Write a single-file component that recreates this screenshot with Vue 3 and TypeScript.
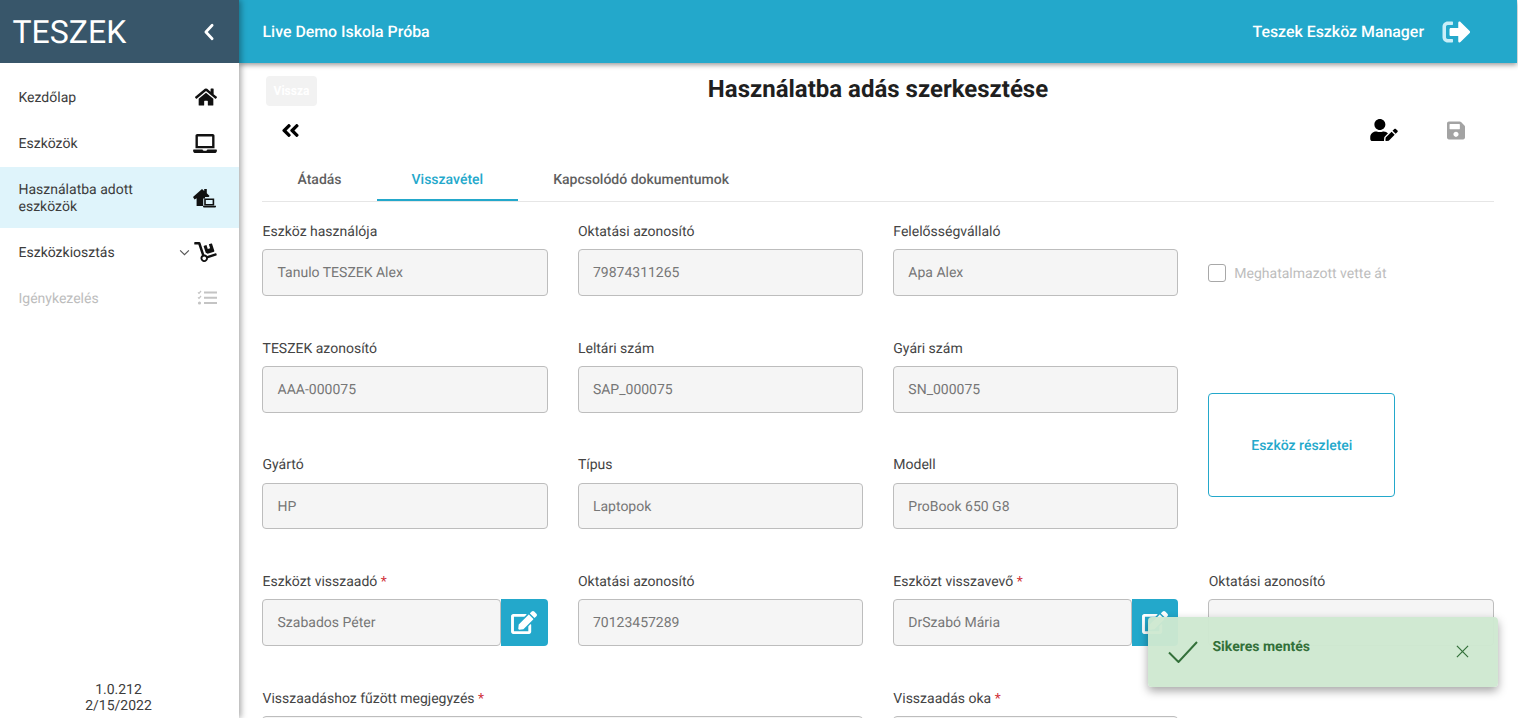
<script setup lang="ts">
interface Field {
  label: string
  value: string
  required?: boolean
  edit?: boolean
}
const firstRow: Field[] = [
  { label: 'Eszköz használója', value: 'Tanulo TESZEK Alex' },
  { label: 'Oktatási azonosító', value: '79874311265' },
  { label: 'Felelősségvállaló', value: 'Apa Alex' },
]
const secondRow: Field[] = [
  { label: 'TESZEK azonosító', value: 'AAA-000075' },
  { label: 'Leltári szám', value: 'SAP_000075' },
  { label: 'Gyári szám', value: 'SN_000075' },
]
const thirdRow: Field[] = [
  { label: 'Gyártó', value: 'HP' },
  { label: 'Típus', value: 'Laptopok' },
  { label: 'Modell', value: 'ProBook 650 G8' },
]
const fourthRow: Field[] = [
  { label: 'Eszközt visszaadó', value: 'Szabados Péter', required: true, edit: true },
  { label: 'Oktatási azonosító', value: '70123457289' },
  { label: 'Eszközt visszavevő', value: 'DrSzabó Mária', required: true, edit: true },
  { label: 'Oktatási azonosító', value: '' },
]
const editPath = 'M402.6 83.2l90.2 90.2c3.8 3.8 3.8 10 0 13.8L274.4 405.6l-92.8 10.3c-12.4 1.4-22.9-9.1-21.5-21.5l10.3-92.8L388.8 83.2c3.8-3.8 10-3.8 13.8 0zm162-22.9l-48.8-48.8c-15.2-15.2-39.9-15.2-55.2 0l-35.4 35.4c-3.8 3.8-3.8 10 0 13.8l90.2 90.2c3.8 3.8 10 3.8 13.8 0l35.4-35.4c15.2-15.3 15.2-40 0-55.2zM384 346.2V448H64V128h229.8c3.2 0 6.2-1.3 8.5-3.5l40-40c7.6-7.6 2.2-20.5-8.5-20.5H48C21.5 64 0 85.5 0 112v352c0 26.5 21.5 48 48 48h352c26.5 0 48-21.5 48-48V306.2c0-10.7-12.9-16-20.5-8.5l-40 40c-2.2 2.3-3.5 5.3-3.5 8.5z'
</script>

<template>
  <div class="shell">
    <aside class="sidebar">
      <div class="brand">
        <span class="brand-name">TESZEK</span>
        <svg class="brand-back" viewBox="0 0 12 20" width="12" height="18"><path d="M9.5 2.5 2.5 10l7 7.5" fill="none" stroke="#fff" stroke-width="3" stroke-linecap="round" stroke-linejoin="round" /></svg>
      </div>
      <nav class="nav">
        <a class="nav-item">
          <span class="nav-text">Kezdőlap</span>
          <svg class="nav-icon" viewBox="0 0 576 512" width="22" height="20"><path d="M280.37 148.26L96 300.11V464a16 16 0 0 0 16 16l112.06-.29a16 16 0 0 0 15.92-16V368a16 16 0 0 1 16-16h64a16 16 0 0 1 16 16v95.64a16 16 0 0 0 16 16.05L464 480a16 16 0 0 0 16-16V300L295.67 148.26a12.19 12.19 0 0 0-15.3 0zM571.6 251.47L488 182.56V44.05a12 12 0 0 0-12-12h-56a12 12 0 0 0-12 12v72.61L318.47 43a48 48 0 0 0-61 0L4.34 251.47a12 12 0 0 0-1.6 16.9l25.5 31A12 12 0 0 0 45.15 301l235.22-193.74a12.19 12.19 0 0 1 15.3 0L530.9 301a12 12 0 0 0 16.9-1.6l25.5-31a12 12 0 0 0-1.7-16.93z" /></svg>
        </a>
        <a class="nav-item">
          <span class="nav-text">Eszközök</span>
          <svg class="nav-icon" viewBox="0 0 640 512" width="24" height="19"><path d="M624 416H381.54c-.74 19.81-14.71 32-32.74 32H288c-18.69 0-33.02-17.47-32.77-32H16c-8.8 0-16 7.2-16 16v16c0 35.2 28.8 64 64 64h512c35.2 0 64-28.8 64-64v-16c0-8.8-7.2-16-16-16zM576 48c0-26.4-21.6-48-48-48H112C85.6 0 64 21.6 64 48v336h512V48zm-64 272H128V64h384v256z" /></svg>
        </a>
        <a class="nav-item active">
          <span class="nav-text">Használatba adott<br />eszközök</span>
          <svg class="nav-icon" viewBox="0 0 24 20" width="24" height="20">
            <path d="M0 9 9 1l2.2 1.9V1h2.6v4.3L16.6 8l-1 1H12v1.4h-1.8V18H3.6v-7.7l-2 1.3z" />
            <path d="M11.2 10.4h10v7h-10zm1.6 1.5v4h6.8v-4z" fill-rule="evenodd" />
            <path d="M10 17.8h13v.8a1 1 0 0 1-1 1H11a1 1 0 0 1-1-1z" />
          </svg>
        </a>
        <a class="nav-item after-active">
          <span class="nav-text">Eszközkiosztás</span>
          <span class="nav-right">
            <svg viewBox="0 0 12 8" width="11" height="7"><path d="M1 1.5 6 6.5l5-5" fill="none" stroke="#555" stroke-width="1.3" /></svg>
            <svg class="nav-icon" viewBox="0 0 576 512" width="23" height="20"><path d="M294.2 277.7c18 5 34.7 13.4 49.5 24.7l161.5-53.8c8.4-2.8 12.9-11.9 10.1-20.2L454.9 47.2c-2.8-8.4-11.9-12.9-20.2-10.1l-61.1 20.4 33.1 99.4L346 177l-33.1-99.4-61.6 20.5c-8.4 2.8-12.9 11.9-10.1 20.2l53 159.4zm281 48.7L565 296c-2.8-8.4-11.9-12.9-20.2-10.1l-213.5 71.2c-17.2-22-43.6-36.4-73.5-37L158.4 21.9C154 8.8 141.8 0 128 0H16C7.2 0 0 7.2 0 16v32c0 8.8 7.2 16 16 16h88.9l92.2 276.7c-26.1 20.4-41.7 53.6-36 90.5 6.1 39.4 37.9 72.3 77.3 79.2 60.2 10.7 112.3-34.8 113.4-92.6l213.3-71.2c8.3-2.8 12.9-11.8 10.1-20.2zM256 464c-26.5 0-48-21.5-48-48s21.5-48 48-48 48 21.5 48 48-21.5 48-48 48z" /></svg>
          </span>
        </a>
        <a class="nav-item disabled">
          <span class="nav-text">Igénykezelés</span>
          <svg class="nav-icon" viewBox="0 0 20 16" width="20" height="16">
            <path d="M1 2.4 2 3.4 4 1M1 7.4l1 1 2-2.4" fill="none" stroke="#c4c4c4" stroke-width="1.2" />
            <circle cx="2.5" cy="13" r="1.6" fill="#c4c4c4" />
            <path d="M7 1.6h13v2H7zM7 6.8h13v2H7zM7 12h13v2H7z" fill="#c4c4c4" />
          </svg>
        </a>
      </nav>
      <div class="version">
        <div>1.0.212</div>
        <div>2/15/2022</div>
      </div>
    </aside>

    <div class="body">
      <header class="topbar">
        <span class="school">Live Demo Iskola Próba</span>
        <div class="topbar-right">
          <span class="app-name">Teszek Eszköz Manager</span>
          <svg viewBox="0 0 512 512" width="29" height="28"><path fill="#fff" d="M497 273L329 441c-15 15-41 4.5-41-17v-96H152c-13.3 0-24-10.7-24-24v-96c0-13.3 10.7-24 24-24h136V88c0-21.4 25.9-32 41-17l168 168c9.3 9.4 9.3 24.6 0 34z" /><path fill="#c9eef8" d="M192 436v-40c0-6.6-5.4-12-12-12H96c-17.7 0-32-14.3-32-32V160c0-17.7 14.3-32 32-32h84c6.6 0 12-5.4 12-12V76c0-6.6-5.4-12-12-12H96c-53 0-96 43-96 96v192c0 53 43 96 96 96h84c6.6 0 12-5.4 12-12z" /></svg>
        </div>
      </header>

      <main class="content">
        <div class="title-row">
          <button class="back-text">Vissza</button>
          <h1 class="title">Használatba adás szerkesztése</h1>
        </div>

        <div class="tool-row">
          <button class="tool-back">
            <svg viewBox="0 0 448 512" width="19" height="21"><path d="M223.7 239l136-136c9.4-9.4 24.6-9.4 33.9 0l22.6 22.6c9.4 9.4 9.4 24.6 0 33.9L319.9 256l96.4 96.4c9.4 9.4 9.4 24.6 0 33.9L393.7 409c-9.4 9.4-24.6 9.4-33.9 0l-136-136c-9.5-9.4-9.5-24.6-.1-34zm-192 34l136 136c9.4 9.4 24.6 9.4 33.9 0l22.6-22.6c9.4-9.4 9.4-24.6 0-33.9L127.9 256l96.4-96.4c9.4-9.4 9.4-24.6 0-33.9L201.7 103c-9.4-9.4-24.6-9.4-33.9 0l-136 136c-9.5 9.4-9.5 24.6-.1 34z" /></svg>
          </button>
          <div class="tool-actions">
            <svg viewBox="0 0 640 512" width="28" height="22"><path d="M224 256c70.7 0 128-57.3 128-128S294.7 0 224 0 96 57.3 96 128s57.3 128 128 128zm89.6 32h-16.7c-22.2 10.2-46.9 16-72.9 16s-50.6-5.8-72.9-16h-16.7C60.2 288 0 348.2 0 422.4V464c0 26.5 21.5 48 48 48h274.9c-2.4-6.8-3.4-14-2.6-21.3l6.8-60.9 1.2-11.1 7.9-7.9 77.3-77.3c-24.5-27.7-60-45.5-99.9-45.5zm45.3 145.3l-6.8 61c-1.1 10.2 7.5 18.8 17.6 17.6l60.9-6.8 137.9-137.9-71.7-71.7-137.9 137.8zM633 268.9L595.1 231c-9.3-9.3-24.5-9.3-33.8 0l-37.8 37.8-4.1 4.1 71.8 71.7 41.8-41.8c9.3-9.4 9.3-24.5 0-33.9z" /></svg>
            <svg class="save" viewBox="0 0 448 512" width="18" height="21"><path d="M433.941 129.941l-83.882-83.882A48 48 0 0 0 316.118 32H48C21.49 32 0 53.49 0 80v352c0 26.51 21.49 48 48 48h352c26.51 0 48-21.49 48-48V163.882a48 48 0 0 0-14.059-33.941zM224 416c-35.346 0-64-28.654-64-64 0-35.346 28.654-64 64-64s64 28.654 64 64c0 35.346-28.654 64-64 64zm96-304.52V212c0 6.627-5.373 12-12 12H76c-6.627 0-12-5.373-12-12V108c0-6.627 5.373-12 12-12h228.52c3.183 0 6.235 1.264 8.485 3.515l3.48 3.48A11.996 11.996 0 0 1 320 111.48z" /></svg>
          </div>
        </div>

        <div class="tabs">
          <div class="tab">Átadás</div>
          <div class="tab tab-active">Visszavétel</div>
          <div class="tab">Kapcsolódó dokumentumok</div>
        </div>

        <div class="grid">
          <div v-for="f in firstRow" :key="f.label" class="field">
            <label class="label">{{ f.label }}</label>
            <div class="input">{{ f.value }}</div>
          </div>
          <div class="check-cell">
            <span class="checkbox"></span>
            <span class="check-label">Meghatalmazott vette át</span>
          </div>

          <div v-for="f in secondRow" :key="f.label" class="field">
            <label class="label">{{ f.label }}</label>
            <div class="input">{{ f.value }}</div>
          </div>
          <button class="details">Eszköz részletei</button>

          <div v-for="f in thirdRow" :key="f.label" class="field">
            <label class="label">{{ f.label }}</label>
            <div class="input">{{ f.value }}</div>
          </div>

          <div v-for="(f, i) in fourthRow" :key="i" class="field">
            <label class="label">{{ f.label }}<span v-if="f.required" class="req"> *</span></label>
            <div class="input-group">
              <div class="input">{{ f.value }}</div>
              <button v-if="f.edit" class="edit-btn">
                <svg viewBox="0 0 576 512" width="26" height="23"><path :d="editPath" /></svg>
              </button>
            </div>
          </div>

          <div class="field span-2">
            <label class="label">Visszaadáshoz fűzött megjegyzés<span class="req"> *</span></label>
            <div class="input tall"></div>
          </div>
          <div class="field">
            <label class="label">Visszaadás oka<span class="req"> *</span></label>
            <div class="input"></div>
          </div>
        </div>
      </main>
    </div>

    <div class="toast">
      <svg class="toast-check" viewBox="0 0 30 22" width="30" height="22"><path d="M1 11.5 10.5 21 29 1" fill="none" stroke="#33703a" stroke-width="2" /></svg>
      <span class="toast-text">Sikeres mentés</span>
      <svg class="toast-close" viewBox="0 0 14 14" width="13" height="13"><path d="M1 1l12 12M13 1 1 13" fill="none" stroke="#33703a" stroke-width="1.3" /></svg>
    </div>
  </div>
</template>

<style>
html,
body {
  margin: 0;
  overflow: hidden;
  background: #fff;
}
</style>

<style scoped>
.shell {
  display: flex;
  width: 1518px;
  height: 718px;
  overflow: hidden;
  position: relative;
  font-family: Roboto, "Liberation Sans", sans-serif;
  font-size: 14px;
  color: #3c3c3c;
  background: #fff;
  text-rendering: geometricPrecision;
}
.sidebar {
  width: 239px;
  flex: none;
  display: flex;
  flex-direction: column;
  background: #fff;
  box-shadow: 2px 0 6px rgba(0, 0, 0, 0.35);
  z-index: 3;
}
.brand {
  height: 63px;
  flex: none;
  display: flex;
  align-items: center;
  justify-content: space-between;
  padding: 0 24px 0 12.5px;
  background: #38566a;
  color: #fff;
}
.brand-name {
  font-size: 32px;
  line-height: 1;
}
.nav {
  flex: 1;
  padding-top: 11px;
  display: flex;
  flex-direction: column;
}
.nav-item {
  height: 46px;
  display: flex;
  align-items: center;
  justify-content: space-between;
  padding: 0 22px 0 18.5px;
  line-height: 17px;
}
.nav-text {
  padding-top: 2px;
}
.nav-item.active {
  height: 61px;
  margin-top: 1px;
  background: #dff4fb;
}
.nav-item.after-active {
  padding-top: 1px;
  box-sizing: border-box;
  height: 47px;
}
.nav-item.disabled {
  color: #bdbdbd;
}
.nav-icon {
  fill: #111;
  display: block;
}
.nav-right {
  display: flex;
  align-items: center;
  gap: 4px;
}
.version {
  text-align: center;
  line-height: 16px;
  padding: 0 2px 4px 0;
  color: #3c3c3c;
}
.body {
  flex: 1;
  min-width: 0;
  display: flex;
  flex-direction: column;
  margin-right: 1px;
}
.topbar {
  height: 63px;
  flex: none;
  display: flex;
  align-items: center;
  justify-content: space-between;
  padding: 0 46px 0 23.5px;
  background: #23a8cb;
  color: #fff;
  font-size: 15.9px;
  font-weight: 500;
  box-shadow: 0 2px 5px rgba(0, 0, 0, 0.4);
  z-index: 2;
}
.topbar-right {
  display: flex;
  align-items: center;
  gap: 18px;
}
.content {
  flex: 1;
  min-height: 0;
  padding: 13px 23px 0;
}
.title-row {
  height: 34px;
  display: grid;
  grid-template-columns: 1fr auto 1fr;
  align-items: start;
}
.back-text {
  justify-self: start;
  margin-left: 4px;
  width: 51px;
  height: 30px;
  border: none;
  border-radius: 4px;
  background: #f2f2f2;
  color: #fff;
  font: 700 12px Roboto, sans-serif;
  padding: 0;
}
.title {
  grid-column: 2;
  margin: 1px 0 0;
  font-size: 24px;
  line-height: 24px;
  font-weight: 700;
  color: #1f1f1f;
  white-space: nowrap;
}
.tool-row {
  height: 40px;
  display: flex;
  align-items: center;
  justify-content: space-between;
}
.tool-back {
  margin-left: 4px;
  width: 48px;
  height: 40px;
  border: none;
  background: #fff;
  padding: 0;
  display: flex;
  align-items: center;
  justify-content: center;
}
.tool-actions {
  display: flex;
  align-items: center;
  gap: 49px;
  padding-right: 29px;
}
.save {
  fill: #a3a3a3;
}
.tabs {
  margin-top: 7px;
  height: 44px;
  display: flex;
  border-bottom: 1px solid #e6e6e6;
  padding-left: 0.5px;
}
.tab {
  padding: 2px 35px 0;
  height: 44px;
  display: flex;
  align-items: center;
  font-weight: 500;
  color: #5f5f5f;
  box-sizing: border-box;
}
.tab-active {
  color: #23a8cb;
  border-bottom: 2px solid #23a8cb;
  padding-top: 4px;
}
.grid {
  margin: 20px 0.25px 0 0.15px;
  display: grid;
  grid-template-columns: repeat(4, minmax(0, 1fr));
  column-gap: 30px;
  row-gap: 43px;
  align-items: start;
}
.field {
  min-width: 0;
}
.span-2 {
  grid-column: span 2;
}
.label {
  display: block;
  height: 18px;
  line-height: 20px;
  margin: -0.3px 0 9.3px;
  color: #444;
  padding-left: 0.4px;
}
.req {
  color: #d0303a;
}
.input {
  box-sizing: border-box;
  height: 46.67px;
  flex: 1;
  min-width: 0;
  display: flex;
  align-items: center;
  padding: 1.4px 0 0 14.4px;
  background: #f5f5f5;
  border: 1px solid #bdbdbd;
  border-radius: 4px;
  color: #777;
}
.tall {
  height: 100px;
}
.input-group {
  display: flex;
}
.edit-btn {
  flex: none;
  width: 46.5px;
  height: 46.67px;
  border: none;
  border-radius: 0 4px 4px 0;
  background: #23a8cb;
  fill: #fff;
  padding: 0;
  display: flex;
  align-items: center;
  justify-content: center;
}
.check-cell {
  height: 74px;
  padding-top: 27px;
  box-sizing: border-box;
  display: flex;
  align-items: center;
  gap: 8px;
  color: #bdbdbd;
}
.check-label {
  padding-top: 2px;
}
.checkbox {
  width: 18px;
  height: 18px;
  box-sizing: border-box;
  border: 1.5px solid #a8a8a8;
  border-radius: 3px;
  background: #fff;
}
.details {
  width: 187px;
  height: 104px;
  margin-top: 54px;
  grid-row: span 2;
  background: #fff;
  border: 1px solid #23a8cb;
  border-radius: 4px;
  color: #23a8cb;
  font: 500 14px Roboto, sans-serif;
  text-rendering: geometricPrecision;
  padding: 2px 0 0;
}
.toast {
  position: absolute;
  left: 1148px;
  top: 617px;
  width: 350px;
  height: 70px;
  background: rgba(206, 232, 208, 0.96);
  border-radius: 4px;
  box-shadow: 0 4px 10px rgba(0, 0, 0, 0.35);
  z-index: 5;
  color: #33703a;
}
.toast-check {
  position: absolute;
  left: 20px;
  top: 24px;
}
.toast-text {
  position: absolute;
  left: 64.5px;
  top: 22px;
  font-weight: 700;
}
.toast-close {
  position: absolute;
  left: 308px;
  top: 28px;
}
</style>
